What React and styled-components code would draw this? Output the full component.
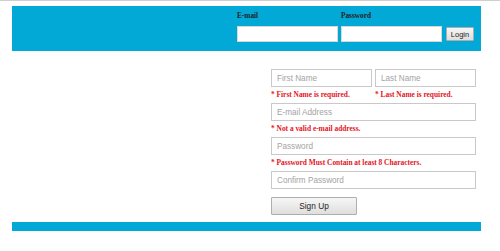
import React from "react";
import styled, { createGlobalStyle } from "styled-components";

const BLUE = "#02a9d7";

const Global = createGlobalStyle`
  html, body { margin: 0; padding: 0; background: #fff; }
  body { font-family: "Liberation Sans", Arial, sans-serif; }
  * { box-sizing: border-box; }
`;

const TopRule = styled.div`
  height: 1px;
  background: #cfcfcf;
`;

const Page = styled.div`
  width: 469px;
  margin: 5px 0 0 12px;
`;

const Header = styled.header`
  height: 45px;
  background: ${BLUE};
  display: flex;
  justify-content: flex-end;
  align-items: flex-end;
  gap: 3px;
  padding: 0 7px 9px 0;
`;

const Field = styled.div`
  display: flex;
  flex-direction: column;
`;

const Label = styled.label`
  font-family: "Liberation Serif", "Times New Roman", serif;
  font-weight: bold;
  font-size: 7.3px;
  line-height: 8px;
  color: #222;
  margin-bottom: 6px;
`;

const HeaderInput = styled.input`
  width: 101px;
  height: 16px;
  border: 1px solid #d8d8d8;
  background: #fff;
  padding: 0 4px;
  outline: none;
`;

const Button = styled.button`
  display: block;
  font-family: "Liberation Sans", Arial, sans-serif;
  color: #1e1e1e;
  background: linear-gradient(#f6f6f6, #dedede);
  border: 1px solid #aeaeae;
  border-radius: 1px;
  padding: 0;
  cursor: pointer;
  width: ${(p) => p.$w}px;
  height: ${(p) => p.$h}px;
  font-size: ${(p) => p.$fs}px;
`;

const LoginButton = styled(Button)`
  margin: 0 0 1px 1px;
`;

const Main = styled.main`
  display: flex;
  justify-content: flex-end;
  padding: 18px 5px 7px 0;
`;

const Form = styled.form`
  width: 205px;
  display: flex;
  flex-direction: column;
`;

const Row = styled.div`
  display: flex;
  gap: 3px;
  & > * {
    flex: 1 1 0;
    min-width: 0;
  }
`;

const Input = styled.input`
  display: block;
  width: 100%;
  height: 18px;
  flex-shrink: 0;
  border: 1px solid #c9c9c9;
  background: #fff;
  padding: 0 5px;
  font-family: "Liberation Sans", Arial, sans-serif;
  font-size: 8.2px;
  color: #333;
  outline: none;
  &::placeholder { color: #a3a3a3; }
`;

const Error = styled.div`
  height: 16px;
  flex-shrink: 0;
  line-height: 16px;
  font-family: "Liberation Serif", "Times New Roman", serif;
  font-weight: bold;
  font-size: 7.4px;
  color: #e3141e;
  white-space: nowrap;
`;

const SubmitRow = styled.div`
  display: flex;
  margin-top: 8px;
`;

const BottomBar = styled.div`
  height: 9px;
  background: ${BLUE};
`;

export default function App() {
  return (
    <>
      <Global />
      <TopRule />
      <Page>
        <Header>
          <Field>
            <Label>E-mail</Label>
            <HeaderInput type="text" />
          </Field>
          <Field>
            <Label>Password</Label>
            <HeaderInput type="password" />
          </Field>
          <LoginButton type="button" $w={28} $h={14} $fs={7.5}>
            Login
          </LoginButton>
        </Header>
        <Main>
          <Form onSubmit={(e) => e.preventDefault()}>
            <Row>
              <Input placeholder="First Name" />
              <Input placeholder="Last Name" />
            </Row>
            <Row>
              <Error>* First Name is required.</Error>
              <Error>* Last Name is required.</Error>
            </Row>
            <Input placeholder="E-mail Address" />
            <Error>* Not a valid e-mail address.</Error>
            <Input type="password" placeholder="Password" />
            <Error>* Password Must Contain at least 8 Characters.</Error>
            <Input type="password" placeholder="Confirm Password" />
            <SubmitRow>
              <Button type="submit" $w={86} $h={18} $fs={8.3}>
                Sign Up
              </Button>
            </SubmitRow>
          </Form>
        </Main>
        <BottomBar />
      </Page>
    </>
  );
}
